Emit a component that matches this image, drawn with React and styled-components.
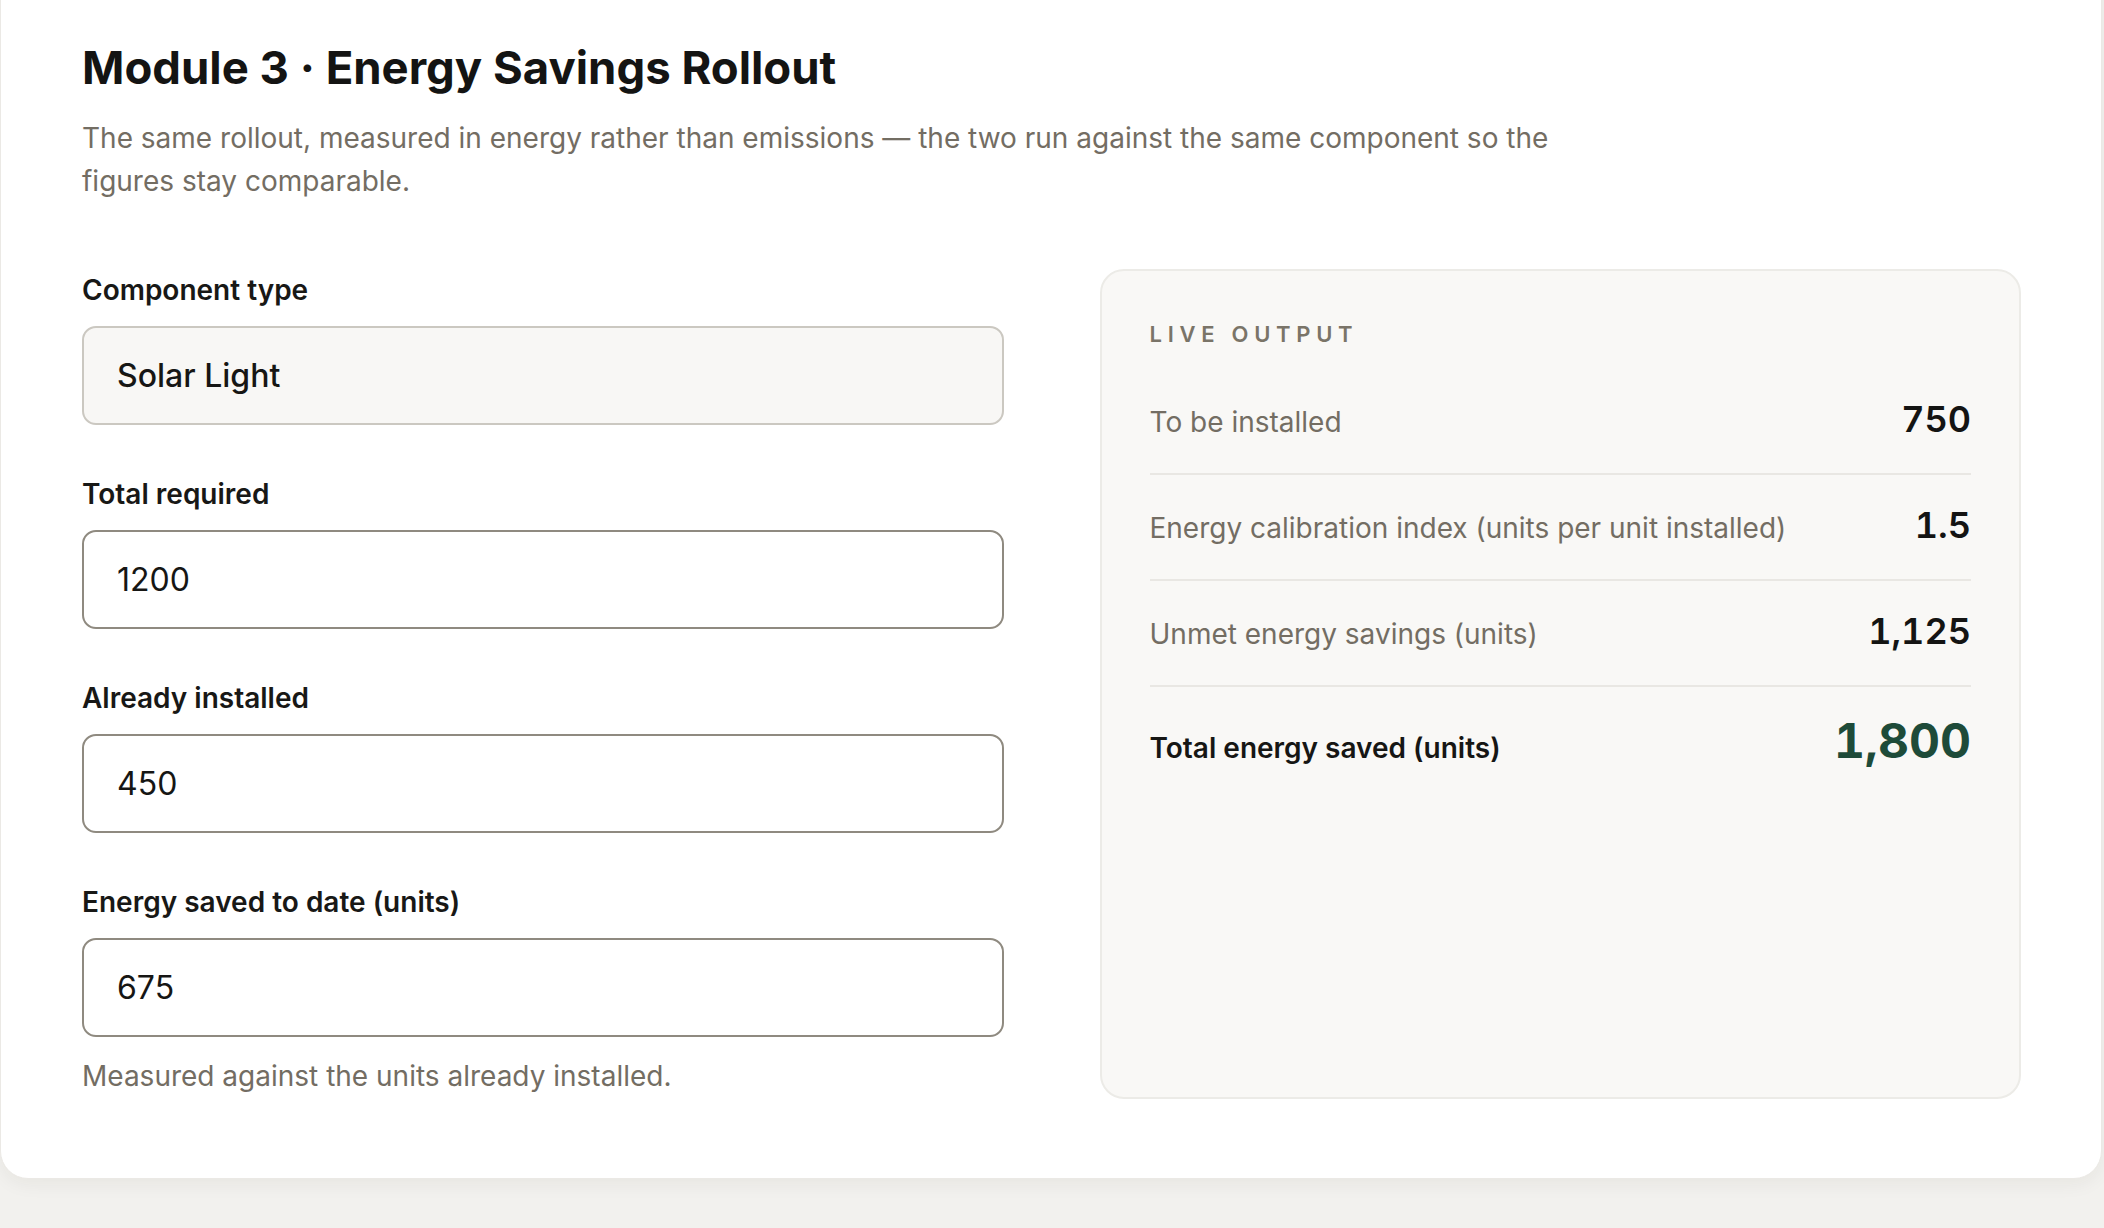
import React from "react";
import styled, { createGlobalStyle } from "styled-components";

const GlobalStyle = createGlobalStyle`
  * {
    box-sizing: border-box;
  }
  body {
    margin: 0;
    background: #f2f1ee;
    font-family: "Inter", "Noto Sans", sans-serif;
    color: #151513;
  }
`;

const Page = styled.div`
  padding: 0 2px 50px 0;
`;

const Card = styled.section`
  margin-top: -40px;
  background: #ffffff;
  border: 1px solid #ebe9e5;
  border-radius: 28px;
  box-shadow: 0 6px 18px rgba(40, 32, 20, 0.05);
  padding: 80px 80px 79px 81px;
`;

const Title = styled.h1`
  margin: 0;
  font-size: 45.5px;
  line-height: 1.2;
  font-weight: 700;
  color: #141413;
`;

const Lead = styled.p`
  margin: 21px 0 0;
  max-width: 1500px;
  font-size: 28px;
  line-height: 43px;
  color: #736d63;
`;

const Columns = styled.div`
  margin-top: 66px;
  display: grid;
  grid-template-columns: 1fr 1fr;
  column-gap: 96px;
  align-items: stretch;
`;

const Form = styled.div`
  display: flex;
  flex-direction: column;
  gap: 48px;
`;

const Field = styled.label`
  display: flex;
  flex-direction: column;
`;

const FieldLabel = styled.span`
  font-size: 28px;
  line-height: 42px;
  font-weight: 600;
  color: #181816;
  margin-bottom: 15px;
`;

const TextInput = styled.input`
  height: 99px;
  width: 100%;
  padding: 0 33px;
  border-radius: 14px;
  font-family: inherit;
  font-size: 32px;
  color: #161614;
  outline: none;
  border: 2px solid ${(p) => (p.$locked ? "#cbc8c1" : "#8f8a80")};
  background: ${(p) => (p.$locked ? "#f8f7f5" : "#ffffff")};
  font-weight: ${(p) => (p.$locked ? 500 : 400)};
`;

const Hint = styled.p`
  margin: 16px 0 0;
  font-size: 28px;
  line-height: 46px;
  color: #736d63;
`;

const Panel = styled.aside`
  background: #f9f8f6;
  border: 2px solid #ecebe7;
  border-radius: 24px;
  padding: 48px;
`;

const Eyebrow = styled.div`
  font-size: 22px;
  line-height: 30px;
  font-weight: 600;
  letter-spacing: 0.26em;
  color: #7a7468;
  margin-bottom: 21px;
`;

const Row = styled.div`
  display: flex;
  justify-content: space-between;
  align-items: baseline;
  gap: 24px;
  padding: 28.5px 0;
  border-bottom: ${(p) => (p.$total ? "none" : "2px solid #e9e7e3")};
`;

const RowLabel = styled.span`
  font-size: 28px;
  line-height: 1.6;
  font-weight: ${(p) => (p.$total ? 600 : 400)};
  color: ${(p) => (p.$total ? "#161614" : "#736d63")};
`;

const RowValue = styled.span`
  font-size: ${(p) => (p.$total ? "48px" : "36px")};
  line-height: ${(p) => (p.$total ? 1.1 : 1.2)};
  font-weight: ${(p) => (p.$total ? 700 : 600)};
  font-variant-numeric: tabular-nums;
  color: ${(p) => (p.$total ? "#1e4b39" : "#141413")};
  white-space: nowrap;
`;

const fields = [
  { label: "Component type", value: "Solar Light", locked: true },
  { label: "Total required", value: "1200" },
  { label: "Already installed", value: "450" },
  { label: "Energy saved to date (units)", value: "675" },
];

const outputs = [
  { label: "To be installed", value: "750" },
  { label: "Energy calibration index (units per unit installed)", value: "1.5" },
  { label: "Unmet energy savings (units)", value: "1,125" },
  { label: "Total energy saved (units)", value: "1,800", total: true },
];

export default function App() {
  return (
    <Page>
      <GlobalStyle />
      <Card>
        <Title>Module 3 · Energy Savings Rollout</Title>
        <Lead>
          The same rollout, measured in energy rather than emissions — the two run against the
          same component so the figures stay comparable.
        </Lead>
        <Columns>
          <div>
            <Form>
              {fields.map((f) => (
                <Field key={f.label}>
                  <FieldLabel>{f.label}</FieldLabel>
                  <TextInput $locked={f.locked} readOnly={f.locked} defaultValue={f.value} />
                </Field>
              ))}
            </Form>
            <Hint>Measured against the units already installed.</Hint>
          </div>
          <Panel>
            <Eyebrow>LIVE OUTPUT</Eyebrow>
            {outputs.map((o) => (
              <Row key={o.label} $total={o.total}>
                <RowLabel $total={o.total}>{o.label}</RowLabel>
                <RowValue $total={o.total}>{o.value}</RowValue>
              </Row>
            ))}
          </Panel>
        </Columns>
      </Card>
    </Page>
  );
}
